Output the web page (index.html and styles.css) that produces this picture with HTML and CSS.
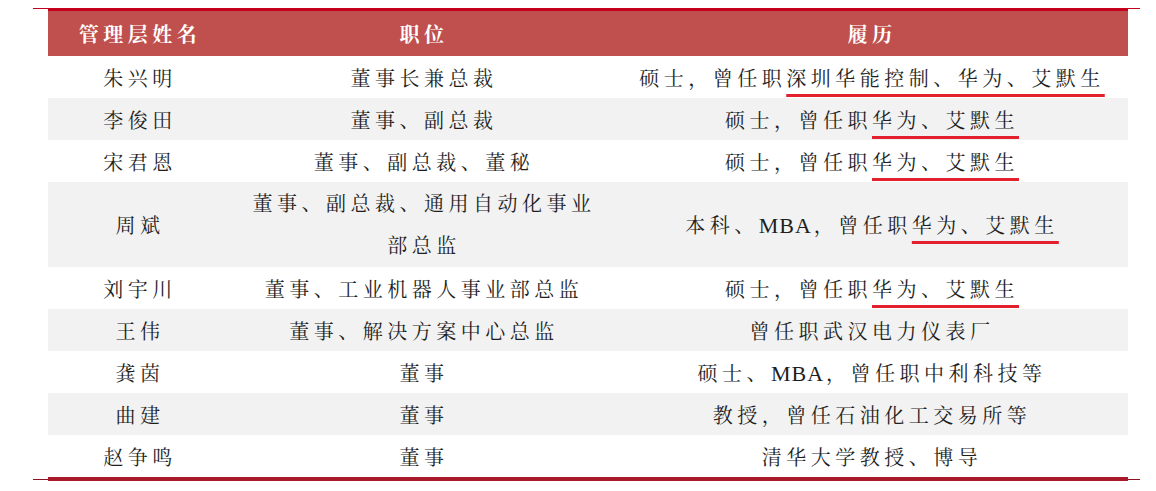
FILE: index.html
```html
<!DOCTYPE html>
<html lang="zh-CN">
<head>
<meta charset="utf-8">
<title>管理层</title>
<link rel="stylesheet" href="styles.css">
</head>
<body>
<div class="page">
  <div class="rule-top"><div class="rule-top-bar"></div></div>
  <table class="sheet">
    <colgroup>
      <col class="c-name">
      <col class="c-role">
      <col class="c-cv">
    </colgroup>
    <thead>
      <tr class="head">
        <th>管理层姓名</th>
        <th>职位</th>
        <th>履历</th>
      </tr>
    </thead>
    <tbody>
      <tr><td>朱兴明</td><td>董事长兼总裁</td><td>硕士，曾任职<span class="mark">深圳华能控制、华为、艾默生</span></td></tr>
      <tr class="alt"><td>李俊田</td><td>董事、副总裁</td><td>硕士，曾任职<span class="mark">华为、艾默生</span></td></tr>
      <tr><td>宋君恩</td><td>董事、副总裁、董秘</td><td>硕士，曾任职<span class="mark">华为、艾默生</span></td></tr>
      <tr class="alt tall"><td>周斌</td><td class="wrap">董事、副总裁、通用自动化事业<br>部总监</td><td>本科、<span class="latin">MBA</span>，曾任职<span class="mark">华为、艾默生</span></td></tr>
      <tr><td>刘宇川</td><td>董事、工业机器人事业部总监</td><td>硕士，曾任职<span class="mark">华为、艾默生</span></td></tr>
      <tr class="alt"><td>王伟</td><td>董事、解决方案中心总监</td><td>曾任职武汉电力仪表厂</td></tr>
      <tr><td>龚茵</td><td>董事</td><td>硕士、<span class="latin">MBA</span>，曾任职中利科技等</td></tr>
      <tr class="alt"><td>曲建</td><td>董事</td><td>教授，曾任石油化工交易所等</td></tr>
      <tr><td>赵争鸣</td><td>董事</td><td>清华大学教授、博导</td></tr>
    </tbody>
  </table>
  <div class="rule-bottom"><div class="rule-bottom-bar"></div></div>
</div>
</body>
</html>
```

FILE: styles.css
```css
html, body {
  margin: 0;
  padding: 0;
  background: #ffffff;
}

.page {
  padding: 8px 0 0 33px;
  width: 1107px;
  display: flex;
  flex-direction: column;
}

.rule-top {
  height: 3px;
  background: linear-gradient(#c4001c 0 1px, transparent 1px);
  display: flex;
  padding-left: 15px;
}

.rule-top-bar {
  width: 1080px;
  height: 3px;
  background: #c4001c;
}

.sheet {
  margin-left: 15px;
  width: 1080px;
  border-collapse: collapse;
  table-layout: fixed;
  font-family: "Liberation Serif", "Noto Serif CJK SC", "Noto Sans CJK SC", serif;
  font-size: 20px;
  color: #1e1e1e;
}

.c-name { width: 184px; }
.c-role { width: 384px; }
.c-cv { width: 512px; }

.sheet th,
.sheet td {
  padding: 0;
  text-align: center;
  vertical-align: middle;
  letter-spacing: 4.5px;
  white-space: nowrap;
}

.head th {
  height: 45px;
  background: #c0504d;
  color: #ffffff;
  font-weight: 700;
}

.sheet tbody tr {
  height: 42px;
  background: #ffffff;
}

.sheet tbody tr.alt {
  background: #f2f2f2;
}

.sheet tbody tr.tall {
  height: 85px;
}

.sheet td.wrap {
  line-height: 42px;
}

.latin {
  font-size: 22px;
  letter-spacing: 1px;
  margin-right: 2px;
}

.mark {
  text-decoration: underline;
  text-decoration-color: #e3202d;
  text-decoration-thickness: 3px;
  text-underline-offset: 8px;
  text-decoration-skip-ink: none;
}

.rule-bottom {
  height: 4px;
  display: flex;
  padding-left: 15px;
  background: linear-gradient(transparent 2px, #8e1222 2px 3px, transparent 3px);
}

.rule-bottom-bar {
  width: 1080px;
  height: 4px;
  background: #a81a2a;
}
```
